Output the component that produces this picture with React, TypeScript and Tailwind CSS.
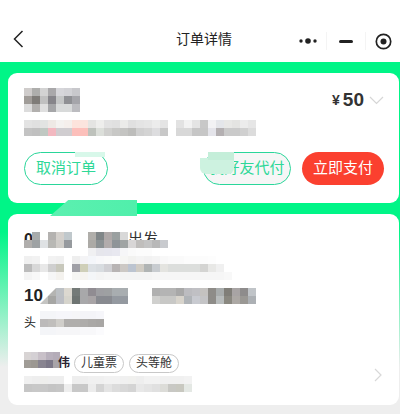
import React from 'react';

const Mosaic: React.FC<{ rows: string[][]; className?: string }> = ({ rows, className }) => (
  <div className={`flex flex-col shrink-0 ${className || ''}`}>
    {rows.map((row, i) => (
      <div key={i} className="flex h-2">
        {row.map((c, j) => (
          <div key={j} className="w-2 h-2" style={{ backgroundColor: c }} />
        ))}
      </div>
    ))}
  </div>
);

const titleRows = [
  ['#cfcccb', '#aeaeac', '#d3d3d3', '#a9a8aa', '#d6d6da', '#d2d2d6', '#c8c8cc'],
  ['#a09c98', '#7f7c78', '#c0c0c0', '#86858a', '#c4c6c6', '#8f9094', '#a5a5aa'],
  ['#dcdcdc', '#b2b0ae', '#dfdfdf', '#a5a6a8', '#d8dada', '#d8dada', '#bcbcc0'],
];
const subRowsA = [
  ['#e3e3e3', '#e0e0e0', '#e2e4e2', '#eee9e5', '#f4f2f0', '#f5efec', '#fde3dc', '#fbe4de', '#e4e4e2', '#eeeeec', '#e2e2e2', '#e0e0e0', '#ebebe9', '#e0e0e0', '#e4e4e4', '#e6e6e6', '#ececec', '#e4e4e4'],
  ['#c3c3c3', '#c0c0c0', '#c0c8c2', '#f2b8c0', '#d0cdd0', '#d0cdd0', '#fcbfbb', '#fcc0bb', '#bec2bc', '#dcdfda', '#d0d0ce', '#c8c8c6', '#c4c4c2', '#bdbdbb', '#d0d0d0', '#d4d4d4', '#dddddf', '#c8c8c8'],
];
const subRowsB = [
  ['#e2e2e2', '#f2f2f2', '#e4e4e4', '#c8c8c8', '#f2f2f4', '#e4e6ea', '#e8e8e6', '#e4e4e2', '#ececec', '#e6e6e6'],
  ['#d8d8d8', '#d8d8d8', '#c6c6c6', '#c6c6c6', '#e4e4ea', '#b4b0b2', '#cacaca', '#cacaca', '#d0d0d0', '#dcdcdc'],
];
const dateRowsA = [
  ['transparent', '#a8acac', '#ffffff', '#b4b2b0', '#d4d0cc', '#c0c8cc', '#ffffff'],
  ['#b0aeac', '#9ea2a4', '#dfe2e4', '#b8b8b4', '#cfcdc8', '#969a9e', '#ffffff'],
];
const dateRowsB = [
  ['#b0aeaa', '#808688', '#aea8a8', '#9aa0a0', '#d8d8d8', 'transparent', 'transparent', 'transparent', 'transparent', 'transparent'],
  ['#acaaa6', '#8c9294', '#b2acac', '#8e9498', '#a0a4a4', '#d8d6d6', '#c0bebc', '#c4c4c4', '#b8b8b8', '#c8cace'],
  ['#f0f0f2', '#e6e6ec', '#e6e6ee', '#e8e8f0', '#f6f6f8', '#fafafa', '#fcfcfc', '#fcfcfc', '#ffffff', '#ffffff'],
];
const infoRows = [
  ['#f0f0f0', '#f2f2f2', '#ffffff', '#f2f2f2', '#f0f0f0', '#ffffff', '#eeeeee', '#f4f4f6', '#f4f6fa', '#f8f8fa', '#fafafa', '#fcfcfc', '#f6f6f4', '#f2f2f0', '#f4f4f4', '#f2f2f2', '#f4f4f4', '#f8f8f8', '#fafafa', '#fafafa', '#fcfcfc', '#fcfcfc', '#fcfcfc', '#fdfdfd', '#ffffff', '#ffffff'],
  ['#bcbcbc', '#d8d8d8', '#e8e8e8', '#cfcfcf', '#c8c8bc', '#ffffff', '#a0a0a6', '#cfcfb8', '#dce0e4', '#d8dce0', '#d0d0d4', '#b8b4b4', '#ccc8c4', '#bcc4d0', '#d0ccc4', '#b0b4b4', '#c8ccd0', '#e4e4e0', '#dcdedc', '#dcdedc', '#dcdedc', '#dcdedc', '#d4d4d2', '#e8e8e6', '#f0f0f0', '#ffffff'],
  ['#f4f4f4', '#f8f8f8', '#ffffff', '#f6f6f6', '#f4f2ee', '#ffffff', '#f6f6f4', '#f6f4f0', '#f4f6f8', '#f4f4f4', '#f6f6f6', '#f6f6f6', '#f4f4f4', '#f4f4f4', '#f4f4f4', '#f4f4f4', '#f6f6f6', '#f6f6f6', '#f6f6f6', '#f6f6f6', '#f6f6f6', '#f6f6f6', '#f6f6f6', '#f6f6f6', '#f6f6f6', '#f8f8f8'],
];
const timeRowsA = [
  ['#c4c4c2', '#b4b4b2', '#bcc0c4', '#dcd8d0', '#747a78', '#a8a8aa', '#908c92', '#9e9ea2', '#9ea0a2', '#a8adb0', '#a8adb0'],
  ['#c4c4c2', '#a6a6a4', '#bcbec4', '#d6d4cc', '#6e7472', '#a8a8aa', '#a8a4a6', '#888a90', '#888a90', '#9499a0', '#9499a0'],
];
const timeRowsB = [
  ['#b0b0b0', '#b4b4b4', '#b4b4b4', '#a8a8a8', '#bcbcc0', '#c0c0c4', '#c4c2c0', '#8e8c88', '#a8acac', '#807e78', '#a8a4a4', '#8e8c8c', '#c0c4c8'],
  ['#d0d0ce', '#c8c8c6', '#c8c8c6', '#d8d4cc', '#b0b4b8', '#c8cad0', '#c4c4c6', '#8e8c88', '#b8bcbc', '#8a8880', '#aca8a4', '#9a9894', '#acb0b4'],
];
const seatRows = [
  ['#f4f5f8', '#f4f5f8', '#f6f6fa', '#f6f6fa', '#f6f6f8', '#f4f4f8', '#f4f4f8', '#f6f6fa'],
  ['#bcbaba', '#c0bebc', '#d0ceca', '#b0aeac', '#b0aeac', '#aeacaa', '#aaa8a6', '#a8a6a4'],
  ['#f4f5f8', '#f4f5f8', '#f6f6f8', '#f6f6f8', '#f6f6f8', '#f8f8fa', '#f8f8fa', '#fbfbfd'],
];
const nameRows = [
  ['#d8d4d4', '#d4d0d4', '#c8c0c8', '#b8b0bc', '#b4acb8'],
  ['#a09c96', '#9c9892', '#888490', '#7c7888', '#a8a4a8'],
];
const idRows = [
  ['#f0f0f0', '#eeeeee', '#eeeeec', '#eeeeee', '#eeeeee', '#ffffff', '#eeeeee', '#eeeeee', '#f0f0f0', '#f0f0f0', '#f2f2f2', '#f2f2f2', '#f0f0f0', '#f0f0ee', '#eeeeee', '#f2f2f2', '#f2f2f2', '#f0f0f0', '#f0f0f0', '#f0f0f0', '#f2f2f2'],
  ['#c6c6c6', '#c8c8c8', '#c8c8c8', '#c4c4c4', '#c6c6c6', '#eeeeee', '#c8c8c8', '#c8c8c8', '#ececec', '#d4d4d4', '#e4e4e4', '#dcdcdc', '#d8d8d8', '#d4d4d4', '#e8e8e8', '#e4e4e4', '#e0e0e0', '#dcdcd8', '#c8c8c4', '#c8c8c0', '#e4e8e4'],
];

export default function App() {
  return (
    <div
      className="relative w-[400px] h-[414px] overflow-hidden bg-[#eeeeee] text-[#222222]"
      style={{ fontFamily: '"Liberation Sans", "Noto Sans CJK SC", sans-serif' }}
    >
      {/* top bar */}
      <div className="h-[62px] bg-white flex items-end pb-[6px] relative">
        <svg width="11" height="18" viewBox="0 0 11 18" className="ml-[13px] mb-[8px]">
          <path d="M9.5 1 L1.5 9 L9.5 17" fill="none" stroke="#222" strokeWidth="1.5" />
        </svg>
        <span className="absolute left-[176px] top-[29px] text-[14px] leading-[20px] text-[#222222]">订单详情</span>
        <div className="ml-auto flex items-center mr-[8px] mb-[6px]">
          <svg width="18" height="8" viewBox="0 0 18 8" className="mr-[9px]">
            <circle cx="2" cy="4" r="1.7" fill="#222" />
            <circle cx="9" cy="4" r="2.8" fill="#222" />
            <circle cx="16" cy="4" r="1.7" fill="#222" />
          </svg>
          <div className="w-px h-[18px] bg-[#f4f4f4]" />
          <div className="w-[14px] h-[3px] bg-[#222222] rounded-sm mx-[12px]" />
          <div className="w-px h-[18px] bg-[#f4f4f4] mr-[9px]" />
          <svg width="17" height="17" viewBox="0 0 17 17">
            <circle cx="8.5" cy="8.5" r="7.2" fill="none" stroke="#222" strokeWidth="1.7" />
            <circle cx="8.5" cy="8.5" r="3" fill="#222" />
          </svg>
        </div>
      </div>

      {/* gradient body */}
      <div className="h-[352px] pt-[11px] pl-2 pr-px flex flex-col gap-[11px] bg-[linear-gradient(#00f587_0px,#00f587_170px,#eeeeee_305px)]">
        <div className="h-[130px] bg-white rounded-[9px] pt-[15px] pl-4 pr-[15px] flex flex-col shrink-0">
          <div className="flex items-start justify-between h-[24px]">
            <Mosaic rows={titleRows} />
            <div className="flex items-center h-[24px]">
              <span className="text-[14px] font-bold mr-[3px] text-[#333333]">¥</span>
              <span className="text-[19px] font-bold text-[#333333]">50</span>
              <svg width="15" height="9" viewBox="0 0 15 9" className="ml-[5px]">
                <path d="M1 1 L7.5 7.5 L14 1" fill="none" stroke="#d6d6d6" strokeWidth="1.2" />
              </svg>
            </div>
          </div>
          <div className="flex gap-2 mt-2">
            <Mosaic rows={subRowsA} />
            <Mosaic rows={subRowsB} />
          </div>
          <div className="flex items-center mt-4">
            <button className="w-[84px] h-[33px] rounded-full border border-[#2ad69a] text-[15px] text-[#2fd898] bg-white">
              取消订单
            </button>
            <button className="ml-auto w-[88px] h-[33px] rounded-full border border-[#2ad69a] text-[15px] text-[#2fd898] bg-[#f6f6f6] whitespace-nowrap">
              我好友代付
            </button>
            <button className="ml-[11px] w-[82px] h-[33px] rounded-full bg-[#fb402f] text-[15px] text-white">
              立即支付
            </button>
          </div>
        </div>

        <div className="h-[191px] bg-white rounded-[9px] pt-[18px] pl-4 flex flex-col relative shrink-0">
          <div className="flex items-start h-4 relative">
            <span className="absolute left-0 -top-[2px] text-[16px] leading-[20px] font-bold">0</span>
            <span className="absolute left-[104px] -top-[3px] text-[15px] leading-[20px] text-[#333333]">出发</span>
            <Mosaic rows={dateRowsA} className="relative z-10" />
            <Mosaic rows={dateRowsB} className="ml-2 relative z-10" />
          </div>
          <Mosaic rows={infoRows} className="mt-2" />
          <div className="flex items-center h-4 mt-2 relative">
            <span className="text-[17px] leading-4 font-bold w-4 whitespace-nowrap">10</span>
            <Mosaic rows={timeRowsA} className="[clip-path:polygon(16px_0,100%_0,100%_100%,0_100%)]" />
            <Mosaic rows={timeRowsB} className="ml-6" />
          </div>
          <div className="flex items-center h-[20px] mt-[9px]">
            <span className="text-[12px] w-4">头</span>
            <Mosaic rows={seatRows} />
          </div>
          <div className="flex items-start h-[20px] mt-[17px]">
            <div className="w-[36px] mt-[2px] overflow-hidden shrink-0">
              <Mosaic rows={nameRows} />
            </div>
            <span className="text-[12px] leading-[18px] mt-[4px] font-bold -ml-[2px] text-[#2a2230]">伟</span>
            <span className="ml-[4px] mt-[4px] w-[50px] h-[19px] rounded-full border border-[#c8c8c8] text-[12px] leading-[17px] text-center text-[#333333]">儿童票</span>
            <span className="ml-[5px] mt-[4px] w-[50px] h-[19px] rounded-full border border-[#c8c8c8] text-[12px] leading-[17px] text-center text-[#333333]">头等舱</span>
          </div>
          <Mosaic rows={idRows} className="mt-[6px]" />
          <svg width="8" height="14" viewBox="0 0 8 14" className="absolute left-[366px] top-[154px]">
            <path d="M1 1 L7 7 L1 13" fill="none" stroke="#d8d8d8" strokeWidth="1.2" />
          </svg>
        </div>
      </div>

      {/* smudges lying over the cards */}
      <div className="absolute left-[50px] top-[200px] w-[87px] h-[16px] bg-[linear-gradient(90deg,#5cf0b0,#50efab)] [clip-path:polygon(21%_0,100%_0,100%_100%,0_100%)]" />
      <div className="absolute left-[200px] top-[158px] w-[34px] h-[16px] rounded-b-[6px] bg-[#cdf2e0]" />
      <div className="absolute left-[208px] top-[152px] w-[26px] h-[8px] bg-[#c4eed9]" />
      <div className="absolute left-[75px] top-[152px] w-[30px] h-[5px] bg-[#d8f8ea]" />
    </div>
  );
}
